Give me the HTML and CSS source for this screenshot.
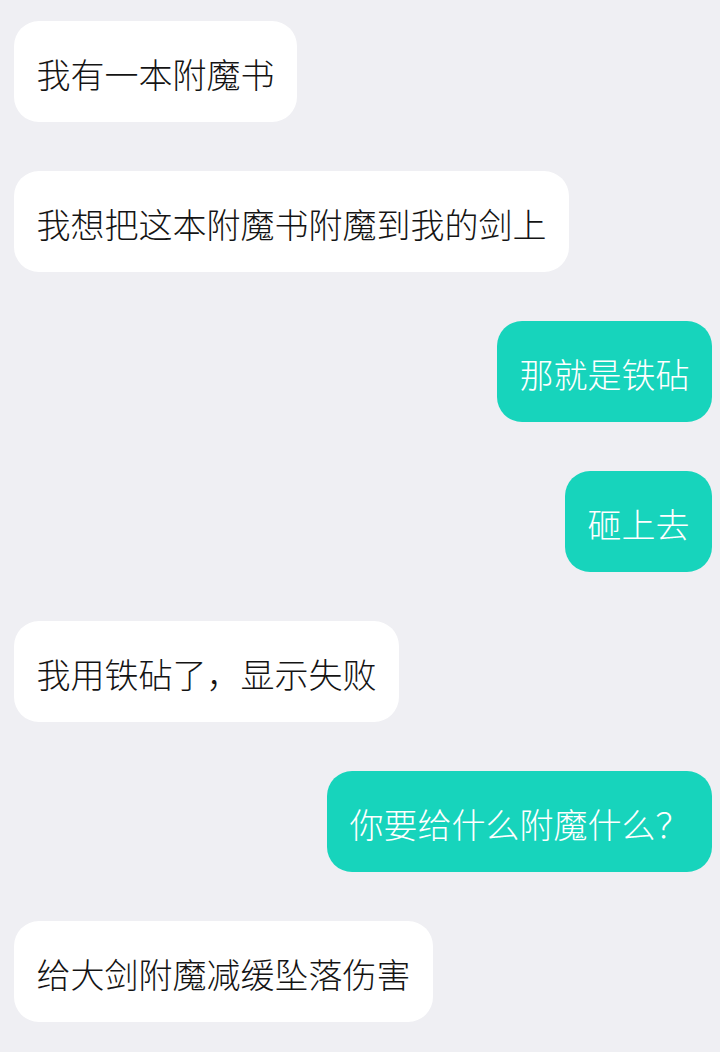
FILE: index.html
```html
<!DOCTYPE html>
<html lang="zh-CN">
<head>
<meta charset="utf-8">
<link rel="stylesheet" href="styles.css">
</head>
<body>
<div class="chat">
  <div class="bubble left">我有一本附魔书</div>
  <div class="bubble left">我想把这本附魔书附魔到我的剑上</div>
  <div class="bubble right">那就是铁砧</div>
  <div class="bubble right">砸上去</div>
  <div class="bubble left">我用铁砧了，显示失败</div>
  <div class="bubble right">你要给什么附魔什么？</div>
  <div class="bubble left">给大剑附魔减缓坠落伤害</div>
</div>
</body>
</html>
```
FILE: styles.css
```css
html, body {
  margin: 0;
  padding: 0;
  background: #efeff3;
}
.chat {
  display: flex;
  flex-direction: column;
  gap: 49.5px;
  padding: 21px 8px 0 14px;
  font-family: "Noto Sans CJK SC", "Noto Sans", sans-serif;
  font-weight: 300;
}
.bubble {
  box-sizing: border-box;
  height: 100.5px;
  display: flex;
  align-items: center;
  padding: 4px 22.5px 0;
  font-size: 34px;
  border-radius: 25px;
  white-space: nowrap;
}
.left {
  align-self: flex-start;
  background: #ffffff;
  color: #141414;
}
.right {
  align-self: flex-end;
  background: #17d4bc;
  color: #ffffff;
}
```
